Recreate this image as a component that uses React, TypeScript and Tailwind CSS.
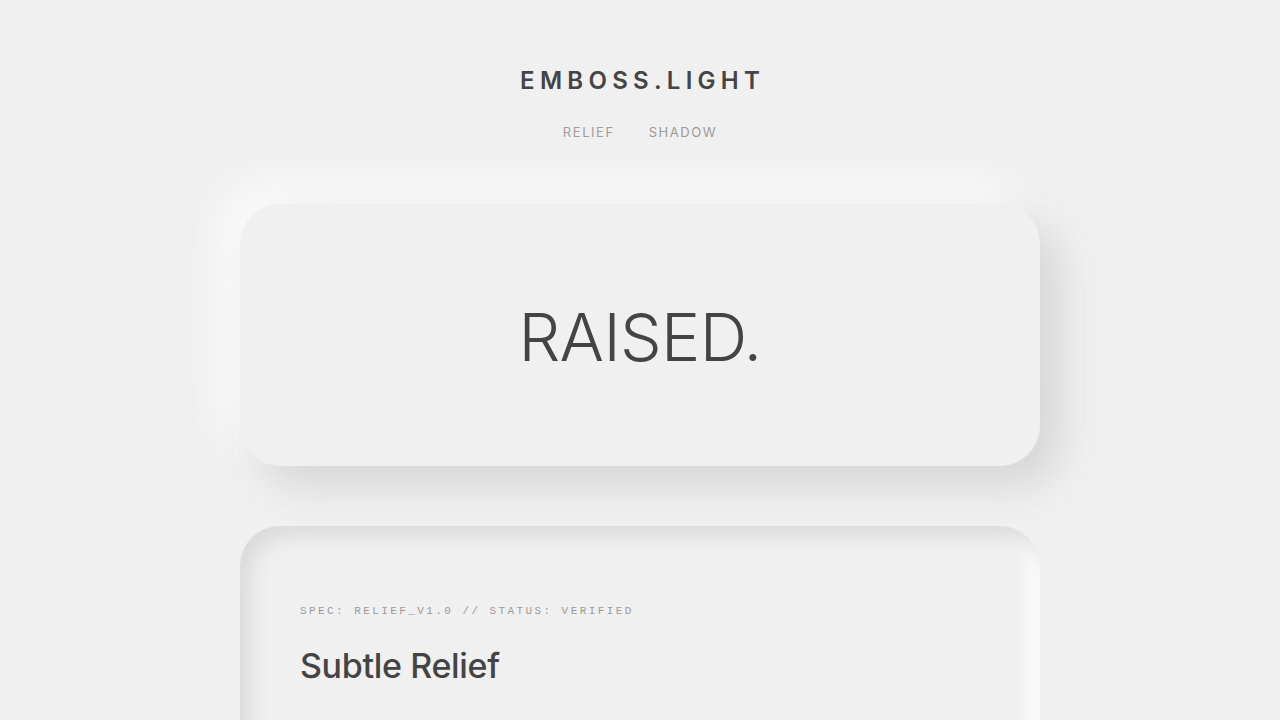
export default function App() {
  const sans = { fontFamily: 'Inter, "Noto Sans", sans-serif' };
  return (
    <div className="min-h-screen bg-[#f0f0f0] text-[#444]" style={sans}>
      <header className="flex flex-col items-center pt-[65px]">
        <h1 className="text-[24px] leading-[32px] font-semibold tracking-[0.22em] pl-[0.22em] text-[#444]">
          EMBOSS.LIGHT
        </h1>
        <nav className="mt-[26px] flex gap-[34px] text-[13px] leading-[18px] tracking-[0.12em] text-[#9a9a9a]">
          <a className="text-[#a39a9a]">RELIEF</a>
          <a>SHADOW</a>
        </nav>
      </header>

      <main className="mx-auto w-[800px] pt-[63px] pb-[60px] flex flex-col gap-[60px]">
        <section className="h-[262px] rounded-[40px] bg-[#f0f0f0] shadow-[20px_20px_40px_#d6d6d6,-20px_-20px_40px_rgba(255,255,255,0.7)] flex items-center justify-center">
          <span className="mt-[4px] text-[66px] leading-none font-light text-[#444] tracking-[-0.01em]">RAISED.</span>
        </section>

        <section className="rounded-[40px] bg-[#f0f0f0] shadow-[inset_10px_10px_20px_#dadada,inset_-10px_-10px_20px_#ffffff] px-[60px] pt-[77px] pb-[60px]">
          <p
            className="text-[11px] leading-[16px] tracking-[0.22em] text-[#9a9a9a]"
            style={{ fontFamily: '"Liberation Mono", "DejaVu Sans Mono", monospace' }}
          >
            SPEC: RELIEF_V1.0 // STATUS: VERIFIED
          </p>
          <h2 className="mt-[25px] text-[34px] leading-[44px] font-medium tracking-[-0.01em] text-[#444]">
            Subtle Relief
          </h2>
          <div className="h-[120px]" />
        </section>
      </main>
    </div>
  );
}
